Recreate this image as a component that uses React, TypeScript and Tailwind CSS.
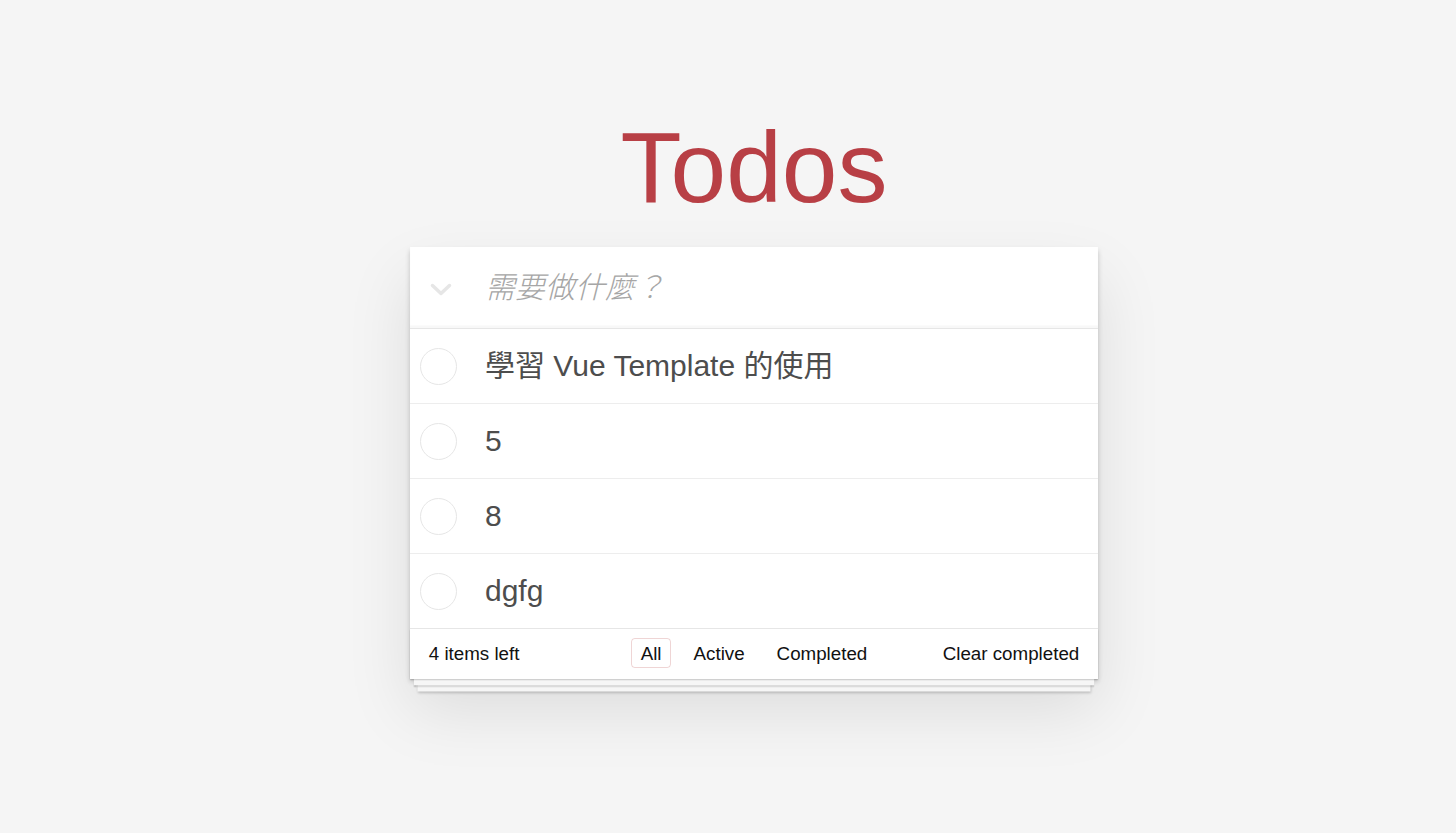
import React from 'react';

const todos = ['學習 Vue Template 的使用', '5', '8', 'dgfg'];
const filters = ['All', 'Active', 'Completed'];

const TodoRow: React.FC<{ title: string; last: boolean }> = ({ title, last }) => (
  <li className={`flex items-center ${last ? '' : 'border-b border-[#ededed]'}`}>
    <div className="w-[75px] shrink-0 pl-[10px]">
      <div className="h-[37px] w-[37px] rounded-full border border-[#e6e6e6]" />
    </div>
    <label className="py-[19px] text-[30px] leading-[36px] text-[#4d4d4d]">{title}</label>
  </li>
);

const App: React.FC = () => {
  return (
    <div className="min-h-screen bg-[#f5f5f5] pl-[52px] pt-[117px] font-['Liberation_Sans','Noto_Sans_CJK_TC',sans-serif] text-[#111]">
      <div className="mx-auto w-[688px]">
        <h1 className="mb-[30px] text-center text-[100px] leading-[100px] text-[#b83f45]">Todos</h1>

        <section className="bg-white shadow-[0_2.5px_5px_0_rgba(0,0,0,0.2),0_31px_62px_0_rgba(0,0,0,0.1)]">
          {/* --- HEADER --- */}
          <div className="flex h-[81px] items-center shadow-[inset_0_-2.5px_1.25px_rgba(0,0,0,0.03)]">
            <div className="w-[75px] shrink-0 pl-[20px] pt-[3px]">
              <svg width="22" height="13" viewBox="0 0 22 13" fill="none">
                <polyline points="2.5,2.5 11,10.5 19.5,2.5" stroke="#e6e6e6" strokeWidth="3.5" strokeLinecap="round" strokeLinejoin="round" />
              </svg>
            </div>
            <input
              className="flex-1 bg-transparent pr-[20px] text-[30px] text-[#4d4d4d] outline-none placeholder:font-light placeholder:italic placeholder:text-[#a6a6a6]"
              placeholder="需要做什麼？"
            />
          </div>

          {/* --- LIST --- */}
          <ul className="border-t border-[#e6e6e6]">
            {todos.map((t, i) => (
              <TodoRow key={i} title={t} last={i === todos.length - 1} />
            ))}
          </ul>

          {/* --- FOOTER --- */}
          <footer className="relative grid h-[51px] grid-cols-[1fr_auto_1fr] items-center border-t border-[#e6e6e6] px-[18.75px] pb-[2px] text-[18.75px]">
            <div className="pointer-events-none absolute inset-x-0 bottom-0 h-[50px] shadow-[0_1.25px_1.25px_rgba(0,0,0,0.2),0_10px_0_-3.75px_#f6f6f6,0_11.25px_1.25px_-3.75px_rgba(0,0,0,0.2),0_20px_0_-7.5px_#f6f6f6,0_21.25px_2.5px_-7.5px_rgba(0,0,0,0.2)]" />
            <span className="pt-[2px]">4 items left</span>
            <ul className="flex items-center gap-[12.5px]">
              {filters.map((f) => (
                <li key={f}>
                  <a
                    className={`inline-block rounded-[3.75px] border px-[8.75px] py-[3.75px] leading-[21px] ${
                      f === 'All' ? 'border-[rgba(175,47,47,0.2)]' : 'border-transparent'
                    }`}
                  >
                    {f}
                  </a>
                </li>
              ))}
            </ul>
            <span className="justify-self-end pt-[3px]">Clear completed</span>
          </footer>
        </section>
      </div>
    </div>
  );
};

export default App;
